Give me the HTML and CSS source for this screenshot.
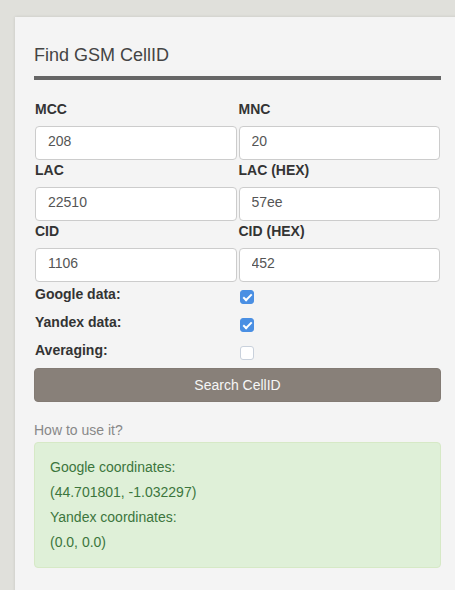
FILE: index.html
```html
<!DOCTYPE html>
<html>
<head>
<meta charset="utf-8">
<link rel="stylesheet" href="styles.css">
</head>
<body>
<div class="panel">
  <h1 class="title">Find GSM CellID</h1>
  <form class="form">
    <div class="grid">
      <div class="field"><label class="lbl">MCC</label><input class="inp" type="text" value="208"></div>
      <div class="field"><label class="lbl">MNC</label><input class="inp" type="text" value="20"></div>
      <div class="field"><label class="lbl">LAC</label><input class="inp" type="text" value="22510"></div>
      <div class="field"><label class="lbl">LAC (HEX)</label><input class="inp" type="text" value="57ee"></div>
      <div class="field"><label class="lbl">CID</label><input class="inp" type="text" value="1106"></div>
      <div class="field"><label class="lbl">CID (HEX)</label><input class="inp" type="text" value="452"></div>
    </div>
    <div class="grid checks">
      <div class="check-lbl">Google data:</div><div class="check-cell"><input class="cb" type="checkbox" checked></div>
      <div class="check-lbl">Yandex data:</div><div class="check-cell"><input class="cb" type="checkbox" checked></div>
      <div class="check-lbl">Averaging:</div><div class="check-cell"><input class="cb" type="checkbox"></div>
    </div>
    <button class="btn" type="button">Search CellID</button>
  </form>
  <div class="help">How to use it?</div>
  <div class="alert">
    <div>Google coordinates:</div>
    <div>(44.701801, -1.032297)</div>
    <div>Yandex coordinates:</div>
    <div>(0.0, 0.0)</div>
  </div>
</div>
</body>
</html>
```
FILE: styles.css
```css
html, body {
  margin: 0;
  padding: 0;
  overflow: hidden;
}
body {
  background: #e0e0db;
  font-family: "Liberation Sans", Arial, sans-serif;
  font-size: 14px;
  line-height: 20px;
  color: #333;
  height: 590px;
}
.panel {
  margin: 17px 0 0 15px;
  width: 445px;
  box-sizing: border-box;
  padding: 0 19px 40px;
  background: #f4f4f4;
  box-shadow: 0 0 3px rgba(0,0,0,0.12);
  min-height: 600px;
}
.title {
  margin: 0;
  padding: 28px 0 11px;
  font-size: 18px;
  line-height: 20px;
  font-weight: normal;
  color: #444;
  border-bottom: 4px solid #666;
}
.form {
  margin: 19px 0 0;
}
.grid {
  display: grid;
  grid-template-columns: 1fr 1fr;
  column-gap: 2px;
  padding: 0 1px;
}
.lbl {
  display: block;
  font-weight: bold;
  line-height: 20px;
  margin-bottom: 7px;
  color: #333;
}
.inp {
  display: block;
  width: 100%;
  box-sizing: border-box;
  height: 34px;
  margin: 0;
  padding: 4px 12px 8px;
  font-family: "Liberation Sans", Arial, sans-serif;
  font-size: 14px;
  line-height: 20px;
  color: #555;
  background: #fff;
  border: 1px solid #ccc;
  border-radius: 4px;
  outline: none;
}
.check-lbl {
  height: 28px;
  box-sizing: border-box;
  padding-top: 2px;
  font-weight: bold;
  color: #333;
}
.check-cell {
  height: 28px;
  box-sizing: border-box;
  padding-top: 8px;
}
.cb {
  appearance: none;
  -webkit-appearance: none;
  display: block;
  position: relative;
  width: 14px;
  height: 14px;
  margin: 0 0 0 1px;
  box-sizing: border-box;
  border: 1px solid #c9d1dc;
  border-radius: 3px;
  background: #fff;
}
.cb:checked {
  background: #4a8fe3;
  border-color: #4a8fe3;
}
.cb:checked::after {
  content: "";
  position: absolute;
  left: 4px;
  top: 1px;
  width: 3px;
  height: 7px;
  border-right: 2px solid #fff;
  border-bottom: 2px solid #fff;
  transform: rotate(45deg);
}
.btn {
  display: block;
  width: 100%;
  height: 34px;
  margin-top: 2px;
  padding: 0;
  box-sizing: border-box;
  border: 1px solid #837b74;
  border-radius: 4px;
  background: #888079;
  color: #f6f6f6;
  font-family: "Liberation Sans", Arial, sans-serif;
  font-size: 14px;
  line-height: 32px;
}
.help {
  margin-top: 18px;
  color: #888;
  line-height: 20px;
}
.alert {
  margin-top: 2px;
  padding: 12px 15px;
  line-height: 25px;
  background: #dff0d8;
  border: 1px solid #d6e9c6;
  border-radius: 4px;
  color: #3c763d;
}
```
